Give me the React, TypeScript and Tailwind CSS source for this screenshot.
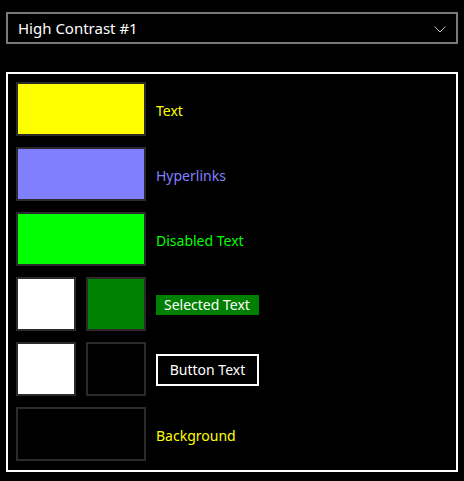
export default function App() {
  const font = { fontFamily: '"Noto Sans", "Open Sans", sans-serif' };

  return (
    <div className="w-[464px] h-[481px] bg-black overflow-hidden" style={font}>
      <div className="pt-3 px-[6px]">
        <div className="h-8 border-2 border-[#7a7a7a] flex items-center justify-between pl-[10px] pr-[8px]">
          <span className="text-[15px] text-white leading-none pt-[1px]">High Contrast #1</span>
          <svg width="14" height="8" viewBox="0 0 14 8" className="mr-[1px] mt-[1px]">
            <path d="M1.5 1.5 L7 7 L12.5 1.5" fill="none" stroke="#bdbdbd" strokeWidth="1" />
          </svg>
        </div>

        <div className="mt-7 h-[400px] border-2 border-white pl-2 pt-2 flex flex-col gap-[11px]">
          <Row>
            <Swatch wide color="bg-[#ffff00]" />
            <Label className="text-[#ffff00]">Text</Label>
          </Row>
          <Row>
            <Swatch wide color="bg-[#8080ff]" />
            <Label className="text-[#8080ff]">Hyperlinks</Label>
          </Row>
          <Row>
            <Swatch wide color="bg-[#00ff00]" />
            <Label className="text-[#00ff00]">Disabled Text</Label>
          </Row>
          <Row>
            <div className="flex gap-[10px]">
              <Swatch color="bg-white" />
              <Swatch color="bg-[#008000]" />
            </div>
            <span className="text-[14px] text-white bg-[#008000] w-[103px] h-5 leading-5 pl-2 mt-[1px]">
              Selected Text
            </span>
          </Row>
          <Row>
            <div className="flex gap-[10px]">
              <Swatch color="bg-white" />
              <Swatch color="bg-black" />
            </div>
            <span className="text-[14px] text-white border-2 border-white w-[103px] h-8 flex items-center justify-center mt-[1px]">
              Button Text
            </span>
          </Row>
          <Row>
            <Swatch wide color="bg-black" />
            <Label className="text-[#ffff00]">Background</Label>
          </Row>
        </div>
      </div>
    </div>
  );
}

function Row({ children }: { children: React.ReactNode }) {
  return <div className="flex items-center gap-[10px] h-[54px]">{children}</div>;
}

function Label({ className, children }: { className: string; children: React.ReactNode }) {
  return <span className={`text-[14px] mt-[2px] ${className}`}>{children}</span>;
}

function Swatch({ color, wide }: { color: string; wide?: boolean }) {
  return (
    <div
      className={`${wide ? "w-[130px]" : "w-[60px]"} h-[54px] border-2 border-[#2b2b2b] ${color}`}
    />
  );
}
